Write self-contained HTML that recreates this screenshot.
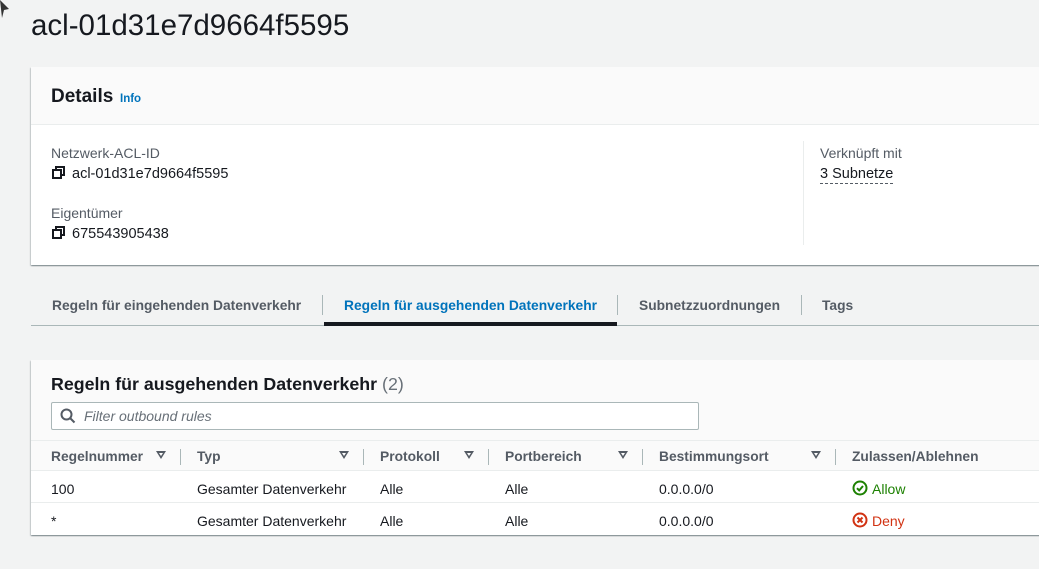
<!DOCTYPE html>
<html><head><meta charset="utf-8"><style>
*{margin:0;padding:0;box-sizing:border-box}
body{width:1039px;height:569px;overflow:hidden;background:#f2f3f3;font-family:"Liberation Sans",sans-serif;color:#16191f;position:relative}
.a{position:absolute;white-space:nowrap}
.card{position:absolute;background:#fff;box-shadow:0 1px 1px 0 rgba(0,28,36,.3),1px 1px 1px 0 rgba(0,28,36,.15),-1px 1px 1px 0 rgba(0,28,36,.15)}
.lbl{font-size:14px;color:#545b64}
.val{font-size:14.5px;color:#16191f}
.tab{font-size:13.8px;font-weight:bold;color:#545b64;top:298px}
.th{font-size:13.8px;font-weight:bold;color:#545b64;top:449px}
.td{font-size:14px;top:481px}
.sep{position:absolute;width:1px;height:16px;background:#aab7b8;top:449px}
.tri{position:absolute;top:451px;width:0;height:0;border-left:5px solid transparent;border-right:5px solid transparent;border-top:8px solid #545b64}
.tri:after{content:"";position:absolute;left:-2px;top:-6px;border-left:2px solid transparent;border-right:2px solid transparent;border-top:3px solid #fff}
</style></head><body>
<svg class="a" style="left:0;top:0" width="10" height="20"><path d="M0 0 L9 9 L4 10 L2 18 Z" fill="#333"/></svg>
<div class="a" style="left:31px;top:9px;font-size:29.5px;color:#16191f">acl-01d31e7d9664f5595</div>

<div class="card" style="left:31px;top:67px;width:1020px;height:198px">
 <div style="height:58px;background:#fafafa;border-bottom:1px solid #eaeded"></div>
 <div class="a" style="left:20px;top:19px;font-size:19px;font-weight:bold">Details</div>
 <div class="a" style="left:89px;top:26px;font-size:11.5px;font-weight:bold;color:#0073bb">Info</div>
 <div class="a lbl" style="left:20px;top:78px">Netzwerk-ACL-ID</div>
 <div class="a val" style="left:41px;top:99px">acl-01d31e7d9664f5595</div>
 <div class="a lbl" style="left:20px;top:138px">Eigentümer</div>
 <div class="a val" style="left:41px;top:159px">675543905438</div>
 <div style="position:absolute;left:772px;top:74px;width:1px;height:104px;background:#eaeded"></div>
 <div class="a lbl" style="left:789px;top:78px">Verknüpft mit</div>
 <div class="a val" style="left:789px;top:99px;border-bottom:1px dashed #545b64;line-height:17px">3 Subnetze</div>
</div>
<svg class="a" style="left:52px;top:166px" width="14" height="14"><rect x="1" y="4" width="8" height="8" fill="none" stroke="#16191f" stroke-width="2"/><path d="M4 4V1h8v8H9" fill="none" stroke="#16191f" stroke-width="2"/></svg>
<svg class="a" style="left:52px;top:226px" width="14" height="14"><rect x="1" y="4" width="8" height="8" fill="none" stroke="#16191f" stroke-width="2"/><path d="M4 4V1h8v8H9" fill="none" stroke="#16191f" stroke-width="2"/></svg>

<div class="a tab" style="left:52px">Regeln für eingehenden Datenverkehr</div>
<div class="a" style="left:322px;top:295px;width:1px;height:20px;background:#aab7b8"></div>
<div class="a tab" style="left:344px;color:#0073bb">Regeln für ausgehenden Datenverkehr</div>
<div class="a" style="left:617px;top:295px;width:1px;height:20px;background:#aab7b8"></div>
<div class="a tab" style="left:639px">Subnetzzuordnungen</div>
<div class="a" style="left:801px;top:295px;width:1px;height:20px;background:#aab7b8"></div>
<div class="a tab" style="left:822px">Tags</div>
<div class="a" style="left:31px;top:325px;width:1008px;height:1px;background:#aab7b8"></div>
<div class="a" style="left:324px;top:322px;width:293px;height:4px;background:#16191f"></div>

<div class="card" style="left:31px;top:360px;width:1020px;height:175px">
 <div style="height:80px;background:#fafafa"></div>
 <div style="height:31px;background:#fafafa;border-top:1px solid #eaeded;border-bottom:1px solid #eaeded"></div>
 <div style="height:32px;border-bottom:1px solid #eaeded"></div>
 <div class="a" style="left:20px;top:14px;font-size:17.8px;font-weight:bold">Regeln für ausgehenden Datenverkehr <span style="font-weight:normal;color:#687078">(2)</span></div>
 <div class="a" style="left:20px;top:42px;width:648px;height:28px;background:#fff;border:1px solid #aab7b8;border-radius:2px"></div>
 <div class="a" style="left:53px;top:48px;font-size:14px;font-style:italic;color:#687078">Filter outbound rules</div>
</div>
<svg class="a" style="left:60px;top:408px" width="16" height="16"><circle cx="6.5" cy="6.5" r="5" fill="none" stroke="#545b64" stroke-width="2"/><path d="M10 10l4.5 4.5" stroke="#545b64" stroke-width="2"/></svg>

<div class="a th" style="left:51px">Regelnummer</div><div class="tri" style="left:156px"></div><div class="sep" style="left:180px"></div>
<div class="a th" style="left:197px">Typ</div><div class="tri" style="left:339px"></div><div class="sep" style="left:363px"></div>
<div class="a th" style="left:380px">Protokoll</div><div class="tri" style="left:464px"></div><div class="sep" style="left:488px"></div>
<div class="a th" style="left:505px">Portbereich</div><div class="tri" style="left:618px"></div><div class="sep" style="left:642px"></div>
<div class="a th" style="left:659px">Bestimmungsort</div><div class="tri" style="left:811px"></div><div class="sep" style="left:835px"></div>
<div class="a th" style="left:852px">Zulassen/Ablehnen</div>

<div class="a td" style="left:51px">100</div>
<div class="a td" style="left:197px">Gesamter Datenverkehr</div>
<div class="a td" style="left:380px">Alle</div>
<div class="a td" style="left:505px">Alle</div>
<div class="a td" style="left:659px">0.0.0.0/0</div>
<svg class="a" style="left:852px;top:480px" width="16" height="16"><circle cx="8" cy="8" r="6.5" fill="none" stroke="#1d8102" stroke-width="2"/><path d="M5 8.2l2.2 2.2L11 6" fill="none" stroke="#1d8102" stroke-width="2"/></svg>
<div class="a td" style="left:872px;color:#1d8102">Allow</div>

<div class="a td" style="left:51px;top:513px">*</div>
<div class="a td" style="left:197px;top:513px">Gesamter Datenverkehr</div>
<div class="a td" style="left:380px;top:513px">Alle</div>
<div class="a td" style="left:505px;top:513px">Alle</div>
<div class="a td" style="left:659px;top:513px">0.0.0.0/0</div>
<svg class="a" style="left:852px;top:512px" width="16" height="16"><circle cx="8" cy="8" r="6.5" fill="none" stroke="#d13212" stroke-width="2"/><path d="M5.5 5.5l5 5M10.5 5.5l-5 5" stroke="#d13212" stroke-width="2"/></svg>
<div class="a td" style="left:872px;top:513px;color:#d13212">Deny</div>
</body></html>
